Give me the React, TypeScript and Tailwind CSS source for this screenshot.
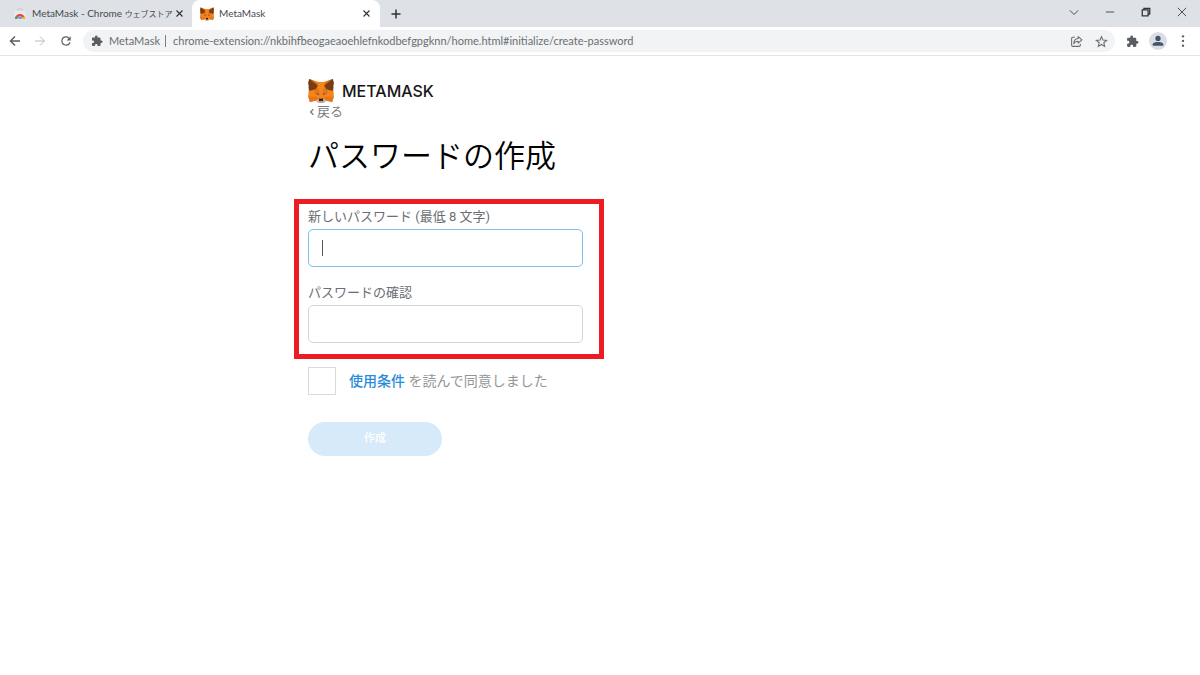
import type { ReactNode } from "react";

const foxShapes: [string, string][] = [
  ["#e2761b", "274.1,35.5 174.6,109.4 193,65.8"],
  ["#e4761b", "44.4,35.5 143.1,110.1 125.6,65.8"],
  ["#e4761b", "238.3,206.8 211.8,247.4 268.5,263 284.8,207.7"],
  ["#e4761b", "33.9,207.7 50.1,263 106.8,247.4 80.3,206.8"],
  ["#e4761b", "103.6,138.2 87.8,162.1 144.1,164.6 142.1,104.1"],
  ["#e4761b", "214.9,138.2 175.9,103.4 174.6,164.6 230.8,162.1"],
  ["#e4761b", "106.8,247.4 140.6,230.9 111.4,208.1"],
  ["#e4761b", "177.9,230.9 211.8,247.4 207.1,208.1"],
  ["#d7c1b3", "211.8,247.4 177.9,230.9 180.6,253 180.3,262.3"],
  ["#d7c1b3", "106.8,247.4 138.3,262.3 138.1,253 140.6,230.9"],
  ["#e4751f", "106.8,247.4 111.6,206.8 80.3,207.7"],
  ["#e4751f", "207,206.8 211.8,247.4 238.3,207.7"],
  ["#e4751f", "230.8,162.1 174.6,164.6 179.8,193.5 188.1,176.1 208.1,185.2"],
  ["#e4751f", "110.6,185.2 130.6,176.1 138.8,193.5 144.1,164.6 87.8,162.1"],
  ["#4a4a50", "140,195 110,186 131,175"],
  ["#4a4a50", "178.500,195 187.500,175 208,186"],
  ["#e4751f", "87.8,162.1 111.4,208.1 110.6,185.2"],
  ["#e4751f", "208.1,185.2 207.1,208.1 230.8,162.1"],
  ["#e4751f", "144.1,164.6 138.8,193.5 145.4,227.6 146.9,182.7"],
  ["#e4751f", "174.6,164.6 171.9,182.6 173.1,227.6 179.8,193.5"],
  ["#f6851b", "179.8,193.5 173.1,227.6 177.9,230.9 207.1,208.1 208.1,185.2"],
  ["#f6851b", "110.6,185.2 111.4,208.1 140.6,230.9 145.4,227.6 138.8,193.5"],
  ["#c0ad9e", "180.3,262.3 180.6,253 178.1,250.8 140.4,250.8 138.1,253 138.3,262.3 106.8,247.4 117.8,256.4 140.1,271.9 178.4,271.9 200.8,256.4 211.8,247.4"],
  ["#161616", "177.9,230.9 173.1,227.6 145.4,227.6 140.6,230.9 138.1,253 140.4,250.8 178.1,250.8 180.6,253"],
  ["#763d16", "278.3,114.2 286.8,73.4 274.1,35.5 190,98 214.9,138.2 267.2,153.5 278.8,140 273.8,136.4 281.8,129.1 275.6,124.3 283.6,118.2"],
  ["#763d16", "31.8,73.4 40.3,114.2 34.9,118.2 42.9,124.3 36.8,129.1 44.8,136.4 39.8,140 51.3,153.5 103.6,138.2 128,98 44.4,35.5"],
  ["#f6851b", "267.2,153.5 214.9,138.2 230.8,162.1 207.1,208.1 238.3,207.7 284.8,207.7"],
  ["#f6851b", "103.6,138.2 51.3,153.5 33.9,207.7 80.3,207.7 111.4,208.1 87.8,162.1"],
  ["#f6851b", "174.6,164.6 190,98 193.1,65.8 125.6,65.8 128,98 144.1,164.6 145.3,182.8 145.4,227.6 173.1,227.6 173.3,182.8"],
];

function Fox({ className }: { className: string }) {
  return (
    <svg viewBox="31 35 256 237" className={className} aria-hidden="true">
      <path d="M44 36L126 66H193L274 36L285 208L268 263L212 247L178 272H140L107 247L50 263L34 208z" fill="#ee7d1c" />
      {foxShapes.map(([fill, points]) => (
        <polygon key={points} points={points} fill={fill} stroke={fill} strokeWidth="2" strokeLinejoin="round" />
      ))}
    </svg>
  );
}

function StoreIcon() {
  return (
    <svg viewBox="0 0 24 24" className="size-3 shrink-0" aria-hidden="true">
      <path d="M7 5V3.500Q7 2 8.500 2h7Q17 2 17 3.500V5" fill="none" stroke="#c4c7cc" strokeWidth="2" />
      <path d="M1 6h22v14q0 2-2 2H3q-2 0-2-2z" fill="#e8eaed" />
      <path d="M2 22a10 10 0 0 1 20 0z" fill="#ea4335" />
      <path d="M2 22q0-4 2-6.500L9 22z" fill="#34a853" />
      <path d="M20.500 16q1.500 2.500 1.500 6h-7z" fill="#fbbc04" />
      <path d="M7 22a5 5 0 0 1 10 0z" fill="#4285f4" stroke="#ffffff" strokeWidth="1" />
    </svg>
  );
}

function Puzzle({ className }: { className: string }) {
  return (
    <svg viewBox="0 0 24 24" className={className} fill="currentColor" aria-hidden="true">
      <path d="M20.500 11H19V7c0-1.100-.9-2-2-2h-4V3.500a2.500 2.500 0 0 0-5 0V5H4c-1.100 0-1.990.9-1.990 2v3.800H3.500c1.490 0 2.700 1.210 2.700 2.700s-1.210 2.700-2.700 2.700H2V20c0 1.100.9 2 2 2h3.800v-1.500c0-1.490 1.210-2.700 2.700-2.700s2.700 1.210 2.700 2.700V22H17c1.100 0 2-.9 2-2v-4h1.500a2.500 2.500 0 0 0 0-5z" />
    </svg>
  );
}

type LineProps = { d: string; className: string; width?: number };

function Line({ d, className, width = 2 }: LineProps) {
  return (
    <svg viewBox="0 0 24 24" className={className} fill="none" stroke="currentColor" strokeWidth={width} aria-hidden="true">
      <path d={d} />
    </svg>
  );
}

function IconButton({ label, className, children }: { label: string; className: string; children: ReactNode }) {
  return (
    <button type="button" aria-label={label} className={`flex shrink-0 items-center justify-center ${className}`}>
      {children}
    </button>
  );
}

const cross = "M4 4l16 16M20 4L4 20";

function TabStrip() {
  return (
    <div className="flex h-[27px] items-stretch bg-[#dee1e6] text-[10px] text-[#45494d]">
      <div className="flex w-48 shrink-0 items-center pr-2 pl-[14px]">
        <StoreIcon />
        <span className="ml-[6px] flex-1 whitespace-nowrap">
          MetaMask - Chrome <span className="text-[8px]">ウェブストア</span>
        </span>
        <IconButton label="タブを閉じる" className="size-[9px]">
          <Line d={cross} className="size-[9px] text-[#2f3337]" width={3} />
        </IconButton>
      </div>
      <div className="flex w-[188px] shrink-0 items-center rounded-t-lg bg-white pr-[9px] pl-2">
        <Fox className="h-[14px] w-[14px] shrink-0" />
        <span className="ml-[5px] flex-1 whitespace-nowrap">MetaMask</span>
        <IconButton label="タブを閉じる" className="size-[9px]">
          <Line d={cross} className="size-[9px] text-[#2f3337]" width={3} />
        </IconButton>
      </div>
      <IconButton label="新しいタブ" className="ml-2 w-4">
        <Line d="M12 3v18M3 12h18" className="size-3 text-[#2f3337]" width={3} />
      </IconButton>
      <div className="ml-auto flex pb-[3px] text-[#2f3337]">
        <IconButton label="タブを検索" className="w-9">
          <Line d="M2 8l10 10L22 8" className="size-[10px]" />
        </IconButton>
        <IconButton label="最小化" className="w-9">
          <Line d="M2 12h20" className="size-[10px]" />
        </IconButton>
        <IconButton label="元に戻す" className="w-9">
          <Line d="M3 7h14v14H3zM7 7V3h14v14h-4" className="size-[10px]" width={3} />
        </IconButton>
        <IconButton label="閉じる" className="w-9">
          <Line d="M2 2l20 20M22 2L2 22" className="size-[10px]" />
        </IconButton>
      </div>
    </div>
  );
}

function Toolbar() {
  return (
    <div className="flex h-[29px] items-center border-b border-[#e3e5e8] bg-white pr-[10px] pl-2 text-[#5a5e63]">
      <IconButton label="戻る" className="size-[14px]">
        <Line d="M22 12H3M12 3l-9 9 9 9" className="size-3" width={3} />
      </IconButton>
      <IconButton label="進む" className="ml-[11px] size-[14px] text-[#b9bcbf]">
        <Line d="M2 12h19M12 3l9 9-9 9" className="size-3" />
      </IconButton>
      <IconButton label="再読み込み" className="ml-3 size-[14px]">
        <svg viewBox="0 0 24 24" className="size-4" fill="currentColor" aria-hidden="true">
          <path d="M17.650 6.350A7.960 7.960 0 0 0 12 4a8 8 0 1 0 7.730 10h-2.080A6 6 0 1 1 12 6c1.660 0 3.140.69 4.220 1.780L13 11h7V4z" />
        </svg>
      </IconButton>
      <div className="ml-[10px] flex h-[22px] flex-1 items-center rounded-full bg-[#f1f3f4] pr-[7px] pl-2 text-[11px] text-[#6a6e73]">
        <Puzzle className="size-3 shrink-0 text-[#5a5e63]" />
        <span className="ml-[6px]">MetaMask</span>
        <span className="mr-[7px] ml-[5px] h-3 w-px bg-[#7d8185]" />
        <input
          aria-label="アドレスバー"
          readOnly
          defaultValue="chrome-extension://nkbihfbeogaeaoehlefnkodbefgpgknn/home.html#initialize/create-password"
          className="min-w-0 flex-1 bg-transparent outline-none"
        />
        <IconButton label="共有" className="size-[14px]">
          <svg viewBox="0 0 24 24" className="size-[13px]" fill="none" stroke="currentColor" strokeWidth="2" strokeLinejoin="round" aria-hidden="true">
            <path d="M9 4H5a2 2 0 0 0-2 2v13a2 2 0 0 0 2 2h12a2 2 0 0 0 2-2v-3" />
            <path d="M15 3l7 6-7 6v-3.500c-4 0-6.500 1-8 4.500 0-5 3-9 8-9.500z" />
          </svg>
        </IconButton>
        <IconButton label="ブックマーク" className="ml-[11px] size-[14px]">
          <Line d="M12 3l2.700 6.300 6.800.6-5.200 4.500 1.600 6.700L12 17.500l-5.900 3.600 1.600-6.700-5.200-4.500 6.800-.6z" className="size-[13px]" />
        </IconButton>
      </div>
      <IconButton label="拡張機能" className="ml-[10px] size-[14px]">
        <Puzzle className="size-[13px]" />
      </IconButton>
      <IconButton label="プロフィール" className="ml-[10px] size-[18px] rounded-full bg-[#dadde3]">
        <svg viewBox="0 0 24 24" className="size-[14px]" fill="#44546a" aria-hidden="true">
          <circle cx="12" cy="7.500" r="4.500" />
          <path d="M3 20v-2.500C3 14.500 9 13.500 12 13.500s9 1 9 4V20z" />
        </svg>
      </IconButton>
      <IconButton label="メニュー" className="ml-[9px] size-[14px]">
        <svg viewBox="0 0 24 24" className="size-[14px]" fill="currentColor" aria-hidden="true">
          <circle cx="12" cy="4" r="2" />
          <circle cx="12" cy="12" r="2" />
          <circle cx="12" cy="20" r="2" />
        </svg>
      </IconButton>
    </div>
  );
}

export default function App() {
  return (
    <div className="min-h-screen bg-white font-['Roboto','Noto_Sans_CJK_JP',sans-serif]">
      <header className="font-['Lato','Noto_Sans_CJK_JP',sans-serif]">
        <TabStrip />
        <Toolbar />
      </header>
      <main className="mx-auto w-full max-w-[584px] pt-[23px]">
        <div className="flex h-6 items-center">
          <Fox className="h-6 w-[26px]" />
          <span className="ml-2 font-['Inter',sans-serif] text-[16px] leading-6 font-medium text-[#161616]">METAMASK</span>
        </div>
        <a href="#back" className="flex h-[18px] w-fit items-center text-[13px] text-[#7a7d81]">
          <Line d="M16 4l-8 8 8 8" className="mr-px size-2" width={4} />
          戻る
        </a>
        <h1 className="mt-4 text-[31px] leading-10 font-[350] text-black">パスワードの作成</h1>
        <form>
          <div className="relative mt-[30px] w-[275px]">
            <label htmlFor="new-password" className="block text-[13px] leading-5 text-[#6b6e72]">
              新しいパスワード (最低 8 文字)
            </label>
            <div className="relative mt-[2px]">
              <input
                id="new-password"
                type="password"
                className="block h-[38px] w-full rounded-[5px] border border-[#7cc0ec] px-3 caret-transparent outline-none"
              />
              <span className="absolute top-[11px] left-[14px] h-4 w-px bg-[#55585c]" />
            </div>
            <label htmlFor="confirm-password" className="mt-4 block text-[13px] leading-5 text-[#6b6e72]">
              パスワードの確認
            </label>
            <input
              id="confirm-password"
              type="password"
              className="mt-[2px] block h-[38px] w-full rounded-[5px] border border-[#d2d5d7] px-3 outline-none"
            />
            <div className="pointer-events-none absolute -top-2 -right-[21px] -bottom-4 -left-[14px] border-[5px] border-[#ed1c24]" />
          </div>
          <div className="mt-6 flex h-7 items-center text-[14px] text-[#939699]">
            <input id="terms" type="checkbox" className="size-7 appearance-none border border-[#d8dadc] bg-white" />
            <label htmlFor="terms" className="ml-[13px]">
              <a href="#terms" className="font-medium text-[#2b8bdc]">使用条件</a> を読んで同意しました
            </label>
          </div>
          <button type="button" disabled className="mt-[27px] h-[34px] w-[134px] rounded-full bg-[#d7eaf9] text-[11px] font-medium text-white">
            作成
          </button>
        </form>
      </main>
    </div>
  );
}
